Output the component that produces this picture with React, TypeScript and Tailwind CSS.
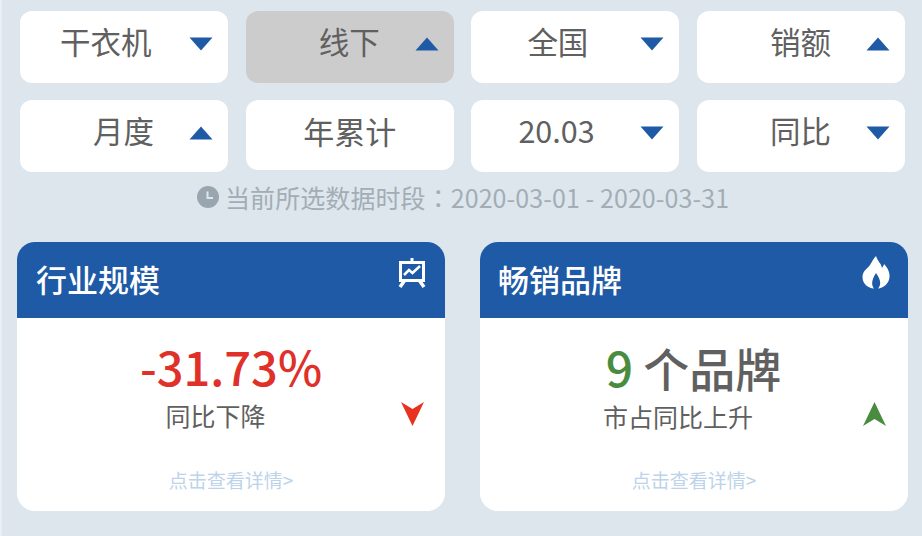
const font = { fontFamily: '"Noto Sans CJK SC", sans-serif' };

function Arrow({ up }: { up?: boolean }) {
  return (
    <svg width="24" height="14" viewBox="0 0 24 14" className="shrink-0">
      <path d={up ? "M12 0.5 L23.5 13.5 L0.5 13.5 Z" : "M0.5 0.5 L23.5 0.5 L12 13.5 Z"} fill="#1f5aa6" />
    </svg>
  );
}

function Select({ label, pl, up, cls = "bg-white", h = "h-[72px]" }: { label: string; pl: string; up?: boolean; cls?: string; h?: string }) {
  return (
    <div className={`flex items-center rounded-[12px] pr-[15px] ${h} ${pl} ${cls}`}>
      <span className="text-[30.5px] leading-none text-[#606060] -mt-[12px] whitespace-nowrap">{label}</span>
      <span className="ml-auto -mt-[7px] flex"><Arrow up={up} /></span>
    </div>
  );
}

function Card({ title, icon, children, arrow, shift, pl }: { title: string; icon: React.ReactNode; children: React.ReactNode; arrow: React.ReactNode; shift?: string; pl?: string }) {
  return (
    <div className="flex h-[269px] w-[428px] flex-col overflow-hidden rounded-[18px] bg-white">
      <div className={`flex h-[76px] items-center justify-between bg-[#1f5aa6] pr-[18px] ${pl ?? "pl-[19px]"}`}>
        <span className="text-[31px] font-medium leading-none text-white -mt-[3px]">{title}</span>
        <span className="-mt-[15px] flex">{icon}</span>
      </div>
      <div className="relative flex flex-1 flex-col items-center">
        {children}
        <span className={`absolute top-[84px] flex ${shift ?? "right-[21px]"}`}>{arrow}</span>
        <span className="mt-auto mb-[18px] text-[19px] leading-[26px] text-[#bcd3ea]">点击查看详情&gt;</span>
      </div>
    </div>
  );
}

export default function App() {
  return (
    <div className="h-[536px] w-[922px] overflow-hidden border-l-2 border-[#e9eff3] bg-[#dde6ed] pl-[18px] pt-[11px]" style={font}>
      <div className="grid w-[885px] grid-cols-[208px_208px_208px_208px] gap-x-[17.7px] gap-y-[17px]">
        <Select label="干衣机" pl="pl-[40px]" />
        <Select label="线下" pl="pl-[73px]" up cls="bg-[#cccccc]" />
        <Select label="全国" pl="pl-[56px]" />
        <Select label="销额" pl="pl-[73px]" up />
        <Select label="月度" pl="pl-[73px]" up />
        <div className="flex h-[70px] items-center justify-center rounded-[12px] bg-white">
          <span className="text-[31px] leading-none text-[#606060] -mt-[10px]">年累计</span>
        </div>
        <Select label="20.03" pl="pl-[47px]" />
        <Select label="同比" pl="pl-[73px]" />
      </div>

      <div className="mt-[9px] ml-[177px] flex h-[36px] items-center text-[25px] leading-none text-[#a3adb5] whitespace-nowrap">
        <svg width="22" height="22" viewBox="0 0 22 22" className="mr-[6px] -mt-[5px] shrink-0">
          <circle cx="11" cy="11" r="11" fill="#9aa6af" />
          <path d="M10.5 5.5 V12 H16" fill="none" stroke="#dde6ed" strokeWidth="2" />
        </svg>
        <span className="-mt-[4px] tracking-[0.08px]">
          当前所选数据时段<span style={{ fontFamily: '"Noto Sans CJK TC", sans-serif' }}>：</span>2020-03-01 - 2020-03-31
        </span>
      </div>

      <div className="-ml-[3px] mt-[25px] flex gap-[35px]">
        <Card
          title="行业规模"
          icon={
            <svg width="30" height="30" viewBox="0 0 30 30" fill="none" stroke="#fff">
              <path d="M15 0 V4" strokeWidth="3" />
              <rect x="3.5" y="4.5" width="23" height="18" strokeWidth="3" />
              <path d="M7 17 L12 12 L15.5 15 L23 8" strokeWidth="2.5" />
              <path d="M8 22 L3 29 M22 22 L27 29" strokeWidth="3.5" />
            </svg>
          }
          arrow={
            <svg width="23" height="24" viewBox="0 0 23 24">
              <path d="M0 0 L11.5 7 L23 0 L11.5 24 Z" fill="#e8321f" />
            </svg>
          }
        >
          <span className="mt-[23px] text-[47px] font-medium leading-[50px] text-[#e0302a]">-31.73%</span>
          <span className="mt-[7px] -ml-[31px] text-[25px] leading-[34px] text-[#606060]">同比下降</span>
        </Card>
        <Card
          title="畅销品牌"
          shift="right-[22px]"
          pl="pl-[18px]"
          icon={
            <svg width="28" height="33" viewBox="0 0 28 33">
              <path
                fillRule="evenodd"
                d="M14 0 C16 6 19 7 20 12 C21 10 22 9 22 8 C26 12 28 17 27.5 21 C27 28 21 32 16 32.5 C19 29 19.5 25 14 17 C9 25 9.5 29 12 32.5 C6 32 0.5 28 0.5 21 C0.5 15 5 13 8 9 C10 6 11 3 14 0 Z"
                fill="#fff"
              />
            </svg>
          }
          arrow={
            <svg width="23" height="24" viewBox="0 0 23 24">
              <path d="M11.5 0 L23 24 L11.5 17 L0 24 Z" fill="#4a8c3f" />
            </svg>
          }
        >
          <span className="-ml-[1px] mt-[23px] text-[46px] font-medium leading-[50px] text-[#606060]">
            <span className="text-[48px] text-[#4a8c3f]">9</span> 个品牌
          </span>
          <span className="mt-[7px] -ml-[32px] text-[25px] leading-[34px] text-[#606060]">市占同比上升</span>
        </Card>
      </div>
    </div>
  );
}
